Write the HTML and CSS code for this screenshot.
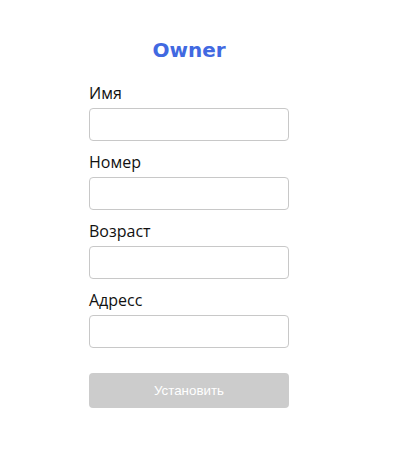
FILE: index.html
```html
<!DOCTYPE html>
<html lang="ru">
<head>
<meta charset="utf-8">
<title>Owner</title>
<link rel="stylesheet" href="styles.css">
</head>
<body>
<form class="owner-form">
  <h1 class="title">Owner</h1>
  <div class="field">
    <label class="label" for="name">Имя</label>
    <input class="input" id="name" type="text">
  </div>
  <div class="field">
    <label class="label" for="number">Номер</label>
    <input class="input" id="number" type="text">
  </div>
  <div class="field">
    <label class="label" for="age">Возраст</label>
    <input class="input" id="age" type="text">
  </div>
  <div class="field">
    <label class="label" for="address">Адресс</label>
    <input class="input" id="address" type="text">
  </div>
  <button class="submit" type="button" disabled>Установить</button>
</form>
</body>
</html>
```
FILE: styles.css
```css
html, body {
  margin: 0;
  padding: 0;
  background: #ffffff;
}

.owner-form {
  width: 200px;
  margin-left: 89px;
  padding-top: 38px;
  display: flex;
  flex-direction: column;
}

.title {
  margin: 0 0 20px;
  text-align: center;
  font-family: "DejaVu Sans", sans-serif;
  font-weight: bold;
  font-size: 20px;
  line-height: 24px;
  color: #4169e1;
}

.field {
  display: flex;
  flex-direction: column;
  margin-bottom: 10px;
}

.label {
  font-family: "Open Sans", sans-serif;
  font-size: 16px;
  line-height: 22px;
  color: #111;
  margin-bottom: 4px;
}

.input {
  box-sizing: border-box;
  width: 200px;
  height: 33px;
  margin: 0;
  border: 1px solid #c8c8c8;
  border-radius: 4px;
  background: #fff;
  padding: 0 8px;
  font-family: "Open Sans", sans-serif;
  font-size: 14px;
}

.submit {
  margin-top: 15px;
  width: 200px;
  height: 35px;
  border: none;
  border-radius: 4px;
  background: #cccccc;
  color: #ffffff;
  font-family: "Liberation Sans", Arial, sans-serif;
  font-size: 13.33px;
  padding: 0;
}
```
